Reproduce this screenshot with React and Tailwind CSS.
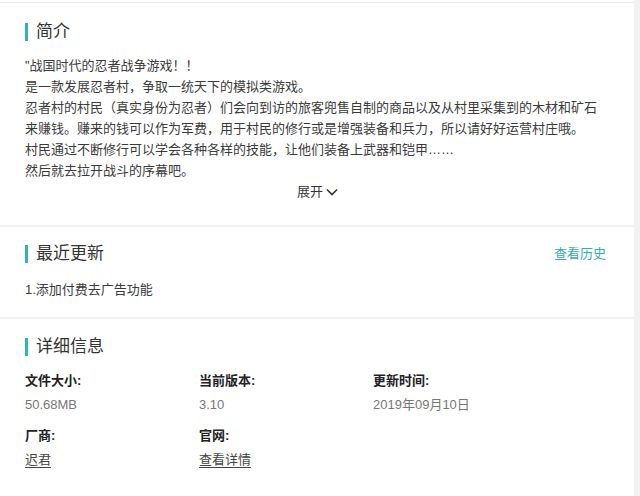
import React from "react";

const font = { fontFamily: '"Liberation Sans", "Noto Sans CJK SC", sans-serif' };

function Heading({ children }) {
  return (
    <div className="flex items-center h-[20px]">
      <span className="w-[3px] h-[18px] bg-[#2bb5b5] mr-[8px]" />
      <span className="text-[17px] leading-[20px] text-[#333]">{children}</span>
    </div>
  );
}

const intro = [
  '"战国时代的忍者战争游戏！！',
  "是一款发展忍者村，争取一统天下的模拟类游戏。",
  "忍者村的村民（真实身份为忍者）们会向到访的旅客兜售自制的商品以及从村里采集到的木材和矿石",
  "来赚钱。赚来的钱可以作为军费，用于村民的修行或是增强装备和兵力，所以请好好运营村庄哦。",
  "村民通过不断修行可以学会各种各样的技能，让他们装备上武器和铠甲……",
  "然后就去拉开战斗的序幕吧。",
];

function Cell({ label, value, link }) {
  return (
    <div className="flex flex-col">
      <div className="text-[13px] leading-[24px] font-bold text-[#222]">{label}</div>
      <div
        className={
          "text-[13px] leading-[24px] " +
          (link ? "text-[#444] underline underline-offset-[3px]" : "text-[#777]")
        }
      >
        {value}
      </div>
    </div>
  );
}

export default function App() {
  return (
    <div className="w-[640px] h-[496px] bg-[#f2f2f2] flex overflow-hidden" style={font}>
      <div className="w-[634px] h-full bg-white pt-[2px]">
        <div className="border-t border-[#ebebeb]">
          <section className="pl-[25px] pr-[28px] pt-[19px] pb-[23px] border-b-2 border-[#f2f2f2]">
            <Heading>简介</Heading>
            <div className="mt-[13px] text-[13px] leading-[21px] text-[#3a3a3a]">
              {intro.map((l, i) => (
                <div key={i} className="whitespace-nowrap">{l}</div>
              ))}
            </div>
            <div className="flex justify-center items-center text-[13px] leading-[21px] text-[#333] pl-[4px]">
              <span>展开</span>
              <svg width="12" height="8" viewBox="0 0 12 8" className="ml-[3px]">
                <path d="M1 1.5 L6 6.5 L11 1.5" fill="none" stroke="#333" strokeWidth="1.6" />
              </svg>
            </div>
          </section>
          <section className="pl-[25px] pr-[28px] pt-[17px] pb-[17px] border-b-2 border-[#f2f2f2]">
            <div className="flex justify-between items-center">
              <Heading>最近更新</Heading>
              <span className="text-[13px] text-[#35adb2]">查看历史</span>
            </div>
            <div className="mt-[15px] text-[13px] leading-[21px] text-[#3a3a3a]">1.添加付费去广告功能</div>
          </section>
          <section className="pl-[25px] pr-[28px] pt-[18px]">
            <Heading>详细信息</Heading>
            <div className="mt-[12px] grid grid-cols-[174px_174px_174px] gap-y-[7px]">
              <Cell label="文件大小:" value="50.68MB" />
              <Cell label="当前版本:" value="3.10" />
              <Cell label="更新时间:" value="2019年09月10日" />
              <Cell label="厂商:" value="迟君" link />
              <Cell label="官网:" value="查看详情" link />
            </div>
          </section>
        </div>
      </div>
    </div>
  );
}
